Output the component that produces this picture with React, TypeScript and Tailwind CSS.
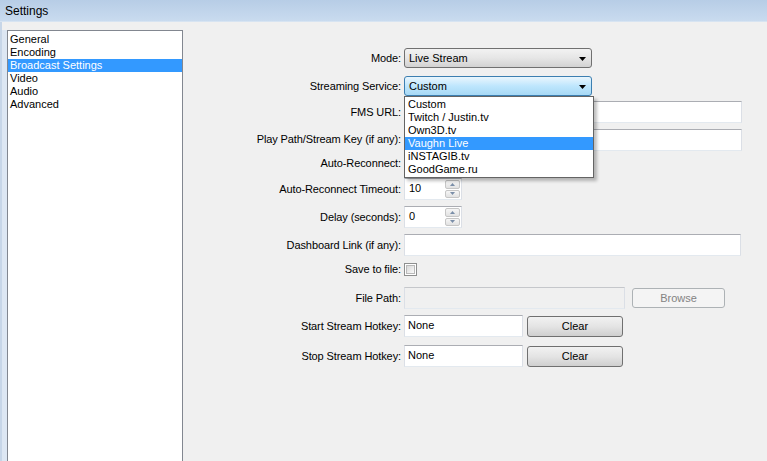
const font = { fontFamily: '"Liberation Sans", Arial, sans-serif' };

const categories = ["General", "Encoding", "Broadcast Settings", "Video", "Audio", "Advanced"];
const services = ["Custom", "Twitch / Justin.tv", "Own3D.tv", "Vaughn Live", "iNSTAGIB.tv", "GoodGame.ru"];

function Arrow() {
  return (
    <svg width="7" height="4" viewBox="0 0 7 4" className="absolute right-[5px] top-[8px]">
      <path d="M0 0h7L3.5 4z" fill="#000" />
    </svg>
  );
}

function Combo({ value, active }: { value: string; active?: boolean }) {
  return (
    <div
      className={
        "relative h-[20px] w-[188px] rounded-[3px] border pl-[4px] text-[11px] leading-[18px] " +
        (active
          ? "border-[#3c7fb1] bg-gradient-to-b from-[#eaf6fd] via-[#bee6fd] to-[#a7d9f5]"
          : "border-[#707070] bg-gradient-to-b from-[#f2f2f2] via-[#e6e6e6] to-[#d2d2d2]")
      }
    >
      {value}
      <Arrow />
    </div>
  );
}

function TextBox({ w, value, disabled }: { w: string; value?: string; disabled?: boolean }) {
  return (
    <div
      className={
        "h-[22px] border border-t-[#abadb3] border-x-[#dbdfe6] border-b-[#e3e9ef] pl-[3px] text-[11px] leading-[18px] " +
        w +
        (disabled ? " bg-[#f0f0f0] border-t-[#c5c7cb]" : " bg-white")
      }
    >
      {value}
    </div>
  );
}

function Spin({ value }: { value: string }) {
  return (
    <div className="flex h-[22px] w-[58px] border border-t-[#abadb3] border-x-[#dbdfe6] border-b-[#e3e9ef] bg-white">
      <div className="flex-1 pl-[4px] text-[11px] leading-[18px]">{value}</div>
      <div className="my-[1px] mr-[1px] flex w-[15px] flex-col gap-[1px]">
        {[0, 1].map((i) => (
          <div
            key={i}
            className="flex flex-1 items-center justify-center rounded-[2px] border border-[#c6c6c6] bg-gradient-to-b from-[#f6f6f6] to-[#e2e2e2]"
          >
            <svg width="5" height="3" viewBox="0 0 5 3">
              <path d={i === 0 ? "M0 3h5L2.5 0z" : "M0 0h5L2.5 3z"} fill="#7a8ea8" />
            </svg>
          </div>
        ))}
      </div>
    </div>
  );
}

function Check() {
  return (
    <div className="h-[13px] w-[13px] border border-[#8e8f8f] bg-white p-[1px]">
      <div className="h-full w-full border border-[#b9b9b9] bg-gradient-to-br from-[#d8d8d8] to-[#fafafa]" />
    </div>
  );
}

function Btn({ label, w, disabled }: { label: string; w: string; disabled?: boolean }) {
  return (
    <div
      className={
        "flex items-center justify-center rounded-[3px] border text-[11px] " +
        w +
        (disabled
          ? " h-[20px] border-[#adb2b5] bg-[#f4f4f4] text-[#838383]"
          : " h-[21px] border-[#707070] bg-gradient-to-b from-[#f2f2f2] via-[#e4e4e4] to-[#cfcfcf] text-black")
      }
    >
      {label}
    </div>
  );
}

function Row({ label, mt, h, children }: { label: string; mt: string; h: string; children: React.ReactNode }) {
  return (
    <div className={"flex items-center " + mt + " " + h}>
      <div className="w-[221px] pr-[3px] text-right text-[11px] tracking-[-0.1px]">{label}</div>
      <div className="relative flex items-center">{children}</div>
    </div>
  );
}

export default function App() {
  return (
    <div className="h-[461px] w-[767px] overflow-hidden bg-[#f0f0f0] text-black" style={font}>
      <div className="h-[22px] border-b border-[#d7e4f2] bg-gradient-to-b from-[#b7cde6] to-[#c9dbef] pl-[5px] text-[12px] leading-[22px]">
        Settings
      </div>
      <div className="flex h-[439px] border-l-2 border-[#c7d6e8]">
        <div className="mt-[8px] w-[5px] bg-[#dde7f3]" />
        <div className="mt-[8px] h-[440px] w-[176px] border border-[#828790] bg-white pt-[2px] text-[11px]">
          {categories.map((c) => (
            <div
              key={c}
              className={"h-[13px] pl-[2px] leading-[13px] " + (c === "Broadcast Settings" ? "bg-[#3399ff] text-white" : "")}
            >
              {c}
            </div>
          ))}
        </div>
        <div className="flex flex-1 flex-col">
          <Row label="Mode:" mt="mt-[26px]" h="h-[20px]">
            <Combo value="Live Stream" />
          </Row>
          <Row label="Streaming Service:" mt="mt-[8px]" h="h-[20px]">
            <Combo value="Custom" active />
            <div className="absolute left-0 top-[20px] z-10 w-[190px] border border-[#646464] bg-white py-[1px] text-[11px] shadow-[3px_3px_3px_rgba(0,0,0,0.25)]">
              {services.map((s) => (
                <div
                  key={s}
                  className={"h-[13px] pl-[3px] leading-[13px] " + (s === "Vaughn Live" ? "bg-[#3399ff] text-white" : "")}
                >
                  {s}
                </div>
              ))}
            </div>
          </Row>
          <Row label="FMS URL:" mt="mt-[5px]" h="h-[22px]">
            <TextBox w="w-[338px]" />
          </Row>
          <Row label="Play Path/Stream Key (if any):" mt="mt-[5px]" h="h-[23px]">
            <TextBox w="w-[338px]" />
          </Row>
          <Row label="Auto-Reconnect:" mt="mt-[5px]" h="h-[14px]">
            <Check />
          </Row>
          <Row label="Auto-Reconnect Timeout:" mt="mt-[8px]" h="h-[22px]">
            <Spin value="10" />
          </Row>
          <Row label="Delay (seconds):" mt="mt-[6px]" h="h-[22px]">
            <Spin value="0" />
          </Row>
          <Row label="Dashboard Link (if any):" mt="mt-[6px]" h="h-[22px]">
            <TextBox w="w-[337px]" />
          </Row>
          <Row label="Save to file:" mt="mt-[7px]" h="h-[13px]">
            <Check />
          </Row>
          <Row label="File Path:" mt="mt-[11px]" h="h-[22px]">
            <TextBox w="w-[221px]" disabled />
            <div className="ml-[7px]">
              <Btn label="Browse" w="w-[93px]" disabled />
            </div>
          </Row>
          <Row label="Start Stream Hotkey:" mt="mt-[6px]" h="h-[22px]">
            <TextBox w="w-[119px]" value="None" />
            <div className="ml-[4px]">
              <Btn label="Clear" w="w-[96px]" />
            </div>
          </Row>
          <Row label="Stop Stream Hotkey:" mt="mt-[8px]" h="h-[22px]">
            <TextBox w="w-[119px]" value="None" />
            <div className="ml-[4px]">
              <Btn label="Clear" w="w-[96px]" />
            </div>
          </Row>
        </div>
      </div>
    </div>
  );
}
